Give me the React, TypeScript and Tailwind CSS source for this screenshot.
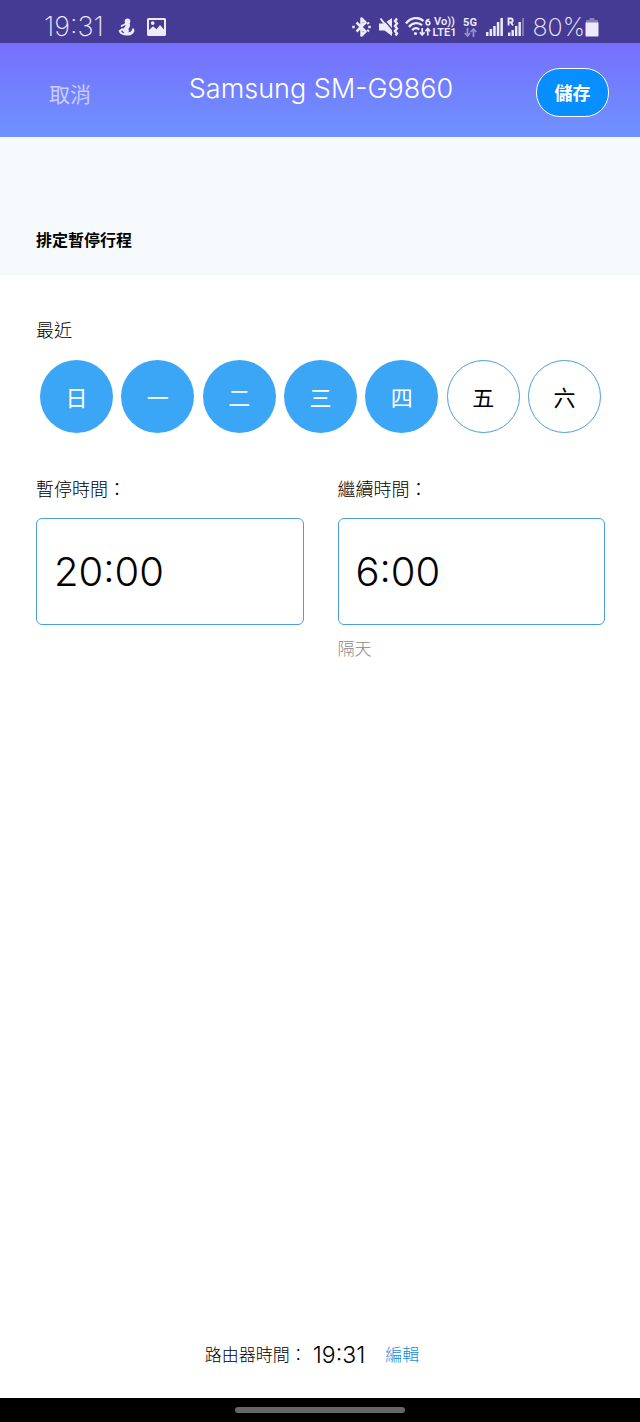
import { useState } from 'react';

const DAYS = ['日', '一', '二', '三', '四', '五', '六'];

function StatusBar() {
  return (
    <div className="flex h-[43px] items-center justify-between bg-[#463b94] pl-11 pr-[41px] pt-2.5 text-[#eceafb]">
      <div className="flex items-center">
        <span className="w-[74px] text-[27px] leading-8 font-extralight">19:31</span>
        <svg className="h-[18px] w-[17px]" viewBox="0 0 17 18" fill="currentColor" aria-hidden="true">
          <circle cx="9.500" cy="3.200" r="2.800" />
          <path d="M6.800 5 11.500 4.800C12.500 7 12 9.500 10.300 11c.8 1 .8 2 .2 3.200L7.200 14 5.300 10.500 7.600 8Z" />
          <path d="M7.400 6 3.600 8" fill="none" stroke="currentColor" strokeWidth="1.800" strokeLinecap="round" />
          <path fillRule="evenodd" d="M.5 12.800C2 12 3 10.500 4.500 10.300 7 11 7.500 13.500 10.500 14.200c2 0 3.200-1 3.300-2.500L15 9.800l1.500 2.200C16.300 15.500 13.500 17.500 9.500 17.500 4.500 17.500 1.500 16 .5 12.800ZM4 12.300l-.9 1 2 1.900 1.200-.2Z" />
        </svg>
        <svg className="ml-3 h-[18px] w-[19px]" viewBox="0 0 19 18" aria-hidden="true">
          <path fillRule="evenodd" fill="currentColor" d="M1.500 0h16A1.500 1.500 0 0 1 19 1.500v15a1.500 1.500 0 0 1-1.500 1.500h-16A1.500 1.500 0 0 1 0 16.500v-15A1.500 1.500 0 0 1 1.500 0ZM2 2v10l4-3.800 3.500 3L13 7l4 4.500V2ZM5.700 3.200a1.900 1.900 0 1 1 0 3.800 1.900 1.900 0 0 1 0-3.800Z" />
        </svg>
      </div>
      <div className="flex items-center">
        <svg className="h-5 w-[19px]" viewBox="0 0 19 20" fill="none" stroke="currentColor" strokeWidth="2.500" aria-hidden="true">
          <path d="m4.500 5.500 9 9-4 4v-17l4 4-9 9" strokeLinejoin="round" />
          <path d="M1.500 8.700v2.600M17.500 8.700v2.600M15.600 5.500l1 1.600M15.600 14.500l1-1.600" />
        </svg>
        <svg className="ml-2 h-5 w-5" viewBox="0 0 20 20" fill="none" stroke="currentColor" strokeWidth="2.400" aria-hidden="true">
          <path d="M0 6.500h5L13 1v18L5.500 13.500H0Z" fill="currentColor" stroke="none" />
          <path d="m4 1.500 10.500 12.500" stroke="#463b94" strokeWidth="1.300" />
          <path d="m1.500 1.500 11.500 15" strokeWidth="2" />
          <path d="M18 1.500 16 4l2 2.500L16 9l2 2.500L16 14l2 2.500-1.500 2" />
        </svg>
        <svg className="ml-1.5 h-5 w-[26px]" viewBox="0 0 26 20" fill="none" stroke="currentColor" strokeWidth="2.300" aria-hidden="true">
          <path d="M1 6.500C6-.3 14-.3 18.500 4M4 10c3.500-4.700 10-4.900 13-1.700M7.200 13.200c2-2.600 5-2.600 7-.6" />
          <circle cx="10.500" cy="16.500" r="1.600" fill="currentColor" stroke="none" />
          <path d="M17.200 11v7m-2.400-2.700 2.400 2.700 2.400-2.700M22.800 18.500v-7m-2.300 2.700 2.300-2.700 2.300 2.700" strokeWidth="1.700" />
          <path d="M24.500 2.500c-2.300-.5-3.500 1-3.500 3.200M23 4.200a1.900 1.900 0 1 1 0 3.800 1.900 1.900 0 0 1 0-3.800Z" strokeWidth="1.500" />
        </svg>
        <div className="ml-0.5 flex w-[24px] flex-col items-center font-[Roboto] text-[11px] leading-[11px] font-semibold">
          <span>Vo))</span>
          <span>LTE1</span>
        </div>
        <div className="ml-1.5 flex w-[15px] flex-col items-center font-[Roboto] text-[11px] leading-[11px] font-bold">
          <span>5G</span>
          <svg className="h-[9px] w-[13px] text-[#9690c8]" viewBox="0 0 13 9" fill="none" stroke="currentColor" strokeWidth="1.800" aria-hidden="true">
            <path d="M3.500 0v8M.8 5l2.700 3 2.700-3M9.500 9V1M6.800 4l2.700-3 2.700 3" />
          </svg>
        </div>
        <svg className="ml-2 h-[18px] w-[17px]" viewBox="0 0 17 18" fill="currentColor" aria-hidden="true">
          <path d="M0 14h2.500v4H0zM3.600 11h2.500v7H3.600zM7.200 8h2.500v10H7.200zM10.800 4h2.500v14h-2.500zM14.400 0h2.500v18h-2.500z" />
        </svg>
        <svg className="ml-1 h-5 w-[18px]" viewBox="0 0 18 20" fill="currentColor" aria-hidden="true">
          <path d="M1 15.500h2.400V19H1zM4.500 13h2.400v6H4.500zM8 9h2.400v10H8zM11.500 5h2.400v14h-2.400z" />
          <path d="M15 1h2v18h-2z" opacity=".35" />
          <path d="M1.500 8.500V1.500h2.300a1.800 1.800 0 0 1 0 3.800H1.500m2.300 0 2.200 3.200" fill="none" stroke="currentColor" strokeWidth="1.800" />
        </svg>
        <span className="ml-2 text-[25px] leading-8 font-extralight">80%</span>
        <svg className="h-5 w-[14px]" viewBox="0 0 14 20" fill="currentColor" aria-hidden="true">
          <path d="M4.500 1h5v2H13v3H1V3h3.500Z" opacity=".4" />
          <path d="M.5 5.500h13v13a1 1 0 0 1-1 1h-11a1 1 0 0 1-1-1Z" />
        </svg>
      </div>
    </div>
  );
}

function TimeField({ id, label, value, note }: { id: string; label: string; value: string; note?: string }) {
  return (
    <div className="flex flex-col">
      <label htmlFor={id} className="text-[18px] leading-6 font-light">{label}</label>
      <input
        id={id}
        type="text"
        defaultValue={value}
        className="mt-4 h-[107px] w-full rounded-md border border-[#4a9fd9] bg-white px-[17px] text-[40px] font-light outline-none"
      />
      {note && <p className="mt-3 text-[17px] leading-6 font-light text-[#888888]">{note}</p>}
    </div>
  );
}

export default function App() {
  const [selected, setSelected] = useState([true, true, true, true, true, false, false]);
  const toggle = (index: number) => setSelected(selected.map((on, i) => (i === index ? !on : on)));

  return (
    <div className="flex min-h-screen flex-col bg-white font-[Inter,'Noto_Sans_CJK_TC',sans-serif] text-black">
      <StatusBar />
      <header className="grid h-[94px] grid-cols-[1fr_auto_1fr] items-center bg-linear-to-b from-[#756ffc] to-[#6e92ff] pt-1 pr-[31px] pl-[33px] text-white">
        <button type="button" className="ml-4 justify-self-start pt-1.5 text-[21px] leading-8 font-normal text-[#c8cfff]">取消</button>
        <h1 className="pb-1.5 text-[27px] leading-8 font-light">Samsung SM-G9860</h1>
        <button type="button" className="h-[49px] w-[73px] justify-self-end rounded-3xl border border-white bg-[#078fff] pt-0.5 text-[18px] font-bold">儲存</button>
      </header>
      <section className="flex h-[138px] flex-col justify-end bg-[#f6fafc] px-9 pb-[23px]">
        <h2 className="text-[16px] leading-6 font-bold">排定暫停行程</h2>
      </section>
      <main className="flex grow flex-col pt-11 pr-[35px] pl-9">
        <h3 className="text-[18px] leading-6 font-light">最近</h3>
        <div className="mt-[17px] flex justify-between px-1">
          {DAYS.map((day, i) => (
            <button
              key={day}
              type="button"
              aria-pressed={selected[i]}
              onClick={() => toggle(i)}
              className={
                selected[i]
                  ? 'size-[73px] rounded-full bg-[#3ca6f6] pt-1 text-[22px] text-white'
                  : 'size-[73px] rounded-full border border-[#4a9fd9] bg-white pt-1 text-[22px] text-black'
              }
            >
              {day}
            </button>
          ))}
        </div>
        <div className="mt-[45px] grid grid-cols-2 gap-[34px]">
          <TimeField id="pause-time" label="暫停時間：" value="20:00" />
          <TimeField id="resume-time" label="繼續時間：" value="6:00" note="隔天" />
        </div>
      </main>
      <footer className="flex items-center justify-center pr-4 pb-[31px] text-[17px] leading-6 font-light">
        <span>路由器時間：</span>
        <span className="ml-1.5 text-[23px] font-light">19:31</span>
        <a href="#edit" className="ml-5 text-[#1a8bd8]">編輯</a>
      </footer>
      <div className="flex h-6 items-center justify-center bg-black">
        <div className="h-1.5 w-[170px] rounded-full bg-[#666666]" />
      </div>
    </div>
  );
}
